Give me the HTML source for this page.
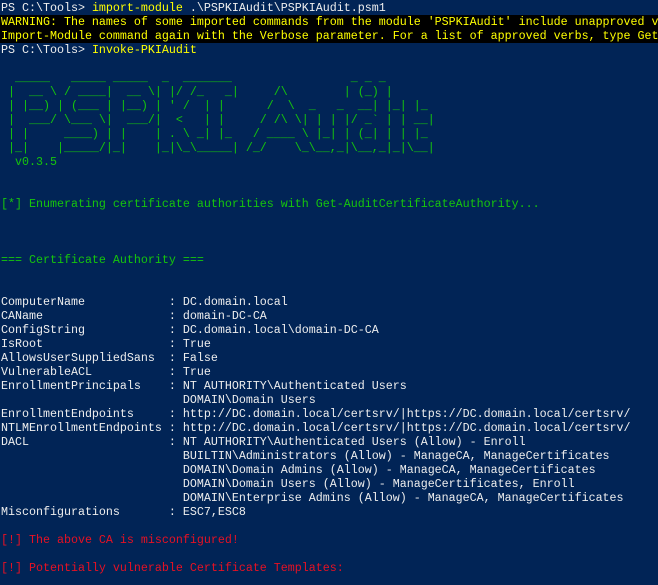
<!DOCTYPE html>
<html><head><meta charset="utf-8"><style>
html,body{margin:0;padding:0;background:#012456;width:658px;height:585px;overflow:hidden}
pre{margin:0;padding:1px 0 0 1px;font-family:"Liberation Mono",monospace;font-size:11.67px;line-height:14px;color:#eeeeee;white-space:pre;width:657px;overflow:hidden}
.y{color:#ffff00}
.w{color:#ffff00;background:#000;display:block;width:658px;margin-left:-1px;padding-left:1px;overflow:hidden}
.g{color:#16c60c}
.r{color:#e81123}
</style></head><body><pre>PS C:\Tools&gt; <span class="y">import-module</span> .\PSPKIAudit\PSPKIAudit.psm1
<span class="w">WARNING: The names of some imported commands from the module 'PSPKIAudit' include unapproved v
Import-Module command again with the Verbose parameter. For a list of approved verbs, type Get</span>PS C:\Tools&gt; <span class="y">Invoke-PKIAudit</span>

<span class="g">  _____   _____ _____  _  _______                 _ _ _
 |  __ \ / ____|  __ \| |/ /_   _|     /\        | (_) |
 | |__) | (___ | |__) | ' /  | |      /  \  _   _  __| |_| |_
 |  ___/ \___ \|  ___/|  &lt;   | |     / /\ \| | | |/ _` | | __|
 | |     ____) | |    | . \ _| |_   / ____ \ |_| | (_| | | |_
 |_|    |_____/|_|    |_|\_\_____| /_/    \_\__,_|\__,_|_|\__|
  v0.3.5</span>


<span class="g">[*] Enumerating certificate authorities with Get-AuditCertificateAuthority...</span>



<span class="g">=== Certificate Authority ===</span>


ComputerName            : DC.domain.local
CAName                  : domain-DC-CA
ConfigString            : DC.domain.local\domain-DC-CA
IsRoot                  : True
AllowsUserSuppliedSans  : False
VulnerableACL           : True
EnrollmentPrincipals    : NT AUTHORITY\Authenticated Users
                          DOMAIN\Domain Users
EnrollmentEndpoints     : http://DC.domain.local/certsrv/|https://DC.domain.local/certsrv/
NTLMEnrollmentEndpoints : http://DC.domain.local/certsrv/|https://DC.domain.local/certsrv/
DACL                    : NT AUTHORITY\Authenticated Users (Allow) - Enroll
                          BUILTIN\Administrators (Allow) - ManageCA, ManageCertificates
                          DOMAIN\Domain Admins (Allow) - ManageCA, ManageCertificates
                          DOMAIN\Domain Users (Allow) - ManageCertificates, Enroll
                          DOMAIN\Enterprise Admins (Allow) - ManageCA, ManageCertificates
Misconfigurations       : ESC7,ESC8

<span class="r">[!] The above CA is misconfigured!</span>

<span class="r">[!] Potentially vulnerable Certificate Templates:</span>
</pre></body></html>
